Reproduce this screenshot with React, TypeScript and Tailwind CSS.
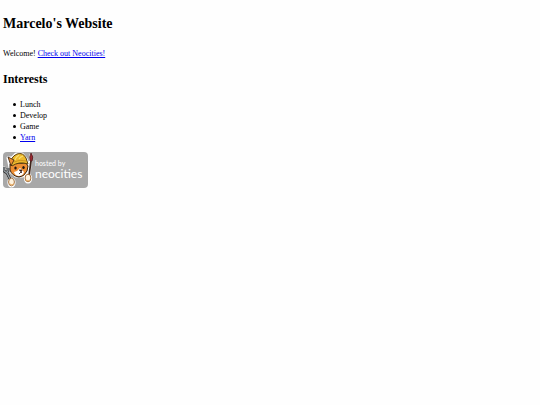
import React from 'react';

interface Interest {
  label: string;
  href?: string;
}

const interests: Interest[] = [
  { label: 'Lunch' },
  { label: 'Develop' },
  { label: 'Game' },
  { label: 'Yarn', href: '#yarn' },
];

const linkClass = 'text-[#0000ee] underline';

const CatMascot: React.FC = () => (
  <svg viewBox="0 0 32 36" className="h-9 w-8 shrink-0" aria-hidden="true">
    {/* white sticker edge */}
    <g stroke="#fff" strokeWidth="3" strokeLinejoin="round" strokeLinecap="round" fill="#fff">
      <path d="M5 6 L9 6 L13 2 L19 2 L23 7 L25 12 L24 20 L20 24 L13 24 L8 20Z" />
      <path d="M1 16 L4 21 L7 27" fill="none" />
      <path d="M28 3 L26 23" fill="none" />
      <ellipse cx="8.5" cy="30.5" rx="2.6" ry="3.6" />
      <ellipse cx="25" cy="26.5" rx="2.6" ry="3.6" />
    </g>
    {/* head */}
    <path d="M7 12 L23 11 L25 14 L24 19 Q21 25 16 25 Q9 24 7 18Z" fill="#ee8f33" stroke="#33200f" strokeWidth="1" />
    <path d="M17 16 L14 19 L11 20 Q12 24 16 24 Q20 24 21 20 L19 18Z" fill="#fff" />
    {/* helmet */}
    <path d="M8 13 Q7 5 14 2 Q20 0 23 6 L25 12 Q16 9 9 14Z" fill="#ecba2e" stroke="#5d400f" strokeWidth="1" />
    <path d="M12 8 Q13 5 16 3 M16 7 Q17 5 20 4" fill="none" stroke="#f9df72" strokeWidth="1.2" />
    <path d="M11 10 Q17 7 23 9" fill="none" stroke="#c68a1c" strokeWidth="0.8" />
    {/* ear */}
    <path d="M5 5 L11 8 L8 14Z" fill="#ee8f33" stroke="#33200f" strokeWidth="0.8" strokeLinejoin="round" />
    <ellipse cx="12.5" cy="16" rx="1.2" ry="1.6" fill="#1d1411" />
    <ellipse cx="20.5" cy="15.5" rx="1.2" ry="1.6" fill="#1d1411" />
    <path d="M16 18 L19 18 L18 20 L19 21 M18 20 L16 22" fill="#2c1815" stroke="#2c1815" strokeWidth="0.8" />
    {/* wrench */}
    <path d="M1 15 L1 19 L4 21 L7 27 M5 16 L5 19 L3 21" fill="none" stroke="#292929" strokeWidth="2.8" />
    <path d="M1 15 L1 19 L4 21 L7 27 M5 16 L5 19 L3 21" fill="none" stroke="#9ca4aa" strokeWidth="1.2" />
    {/* brush */}
    <path d="M28 9 L26 24" stroke="#3d2419" strokeWidth="1.8" />
    <path d="M28 1 Q31 5 29 9 L27 9 Q26 5 28 1Z" fill="#9d2931" stroke="#4b191b" strokeWidth="0.8" />
    {/* paws */}
    <ellipse cx="8.5" cy="30" rx="2.9" ry="3.8" fill="#fff3df" stroke="#9a622a" strokeWidth="0.9" />
    <ellipse cx="25" cy="26" rx="2.9" ry="3.8" fill="#fff3df" stroke="#9a622a" strokeWidth="0.9" />
    <path d="M7 32 Q9 34 11 32 M23 28 Q25 30 27 28" fill="none" stroke="#e5a65c" strokeWidth="1" />
  </svg>
);

const HostedBadge: React.FC = () => (
  <a
    href="#neocities"
    className="inline-flex h-9 items-center rounded-[4px] bg-[#a8a8a8] pr-[6px] font-['Lato',sans-serif] text-white"
  >
    <CatMascot />
    <span className="flex flex-col">
      <span className="text-[7px] leading-[8px]">hosted by</span>
      <span className="text-[12px] leading-[14px]">neocities</span>
    </span>
  </a>
);

const App: React.FC = () => {
  return (
    <main className="min-h-screen bg-[#fefefe] px-[3px] pt-[14px] font-['Liberation_Serif',serif] text-[8px] leading-[11px] text-black">
      <h1 className="text-[14px] leading-[20px] font-bold">Marcelo's Website</h1>
      <p className="mt-[14px]">
        Welcome! <a href="#neocities" className={linkClass}>Check out Neocities!</a>
      </p>
      <h2 className="mt-[13px] text-[12px] leading-[15px] font-bold">Interests</h2>
      <ul className="mt-3 mb-[9px] pl-[10px]">
        {interests.map((item) => (
          <li
            key={item.label}
            className="flex items-center gap-1 before:size-[3px] before:rounded-full before:bg-black"
          >
            {item.href ? <a href={item.href} className={linkClass}>{item.label}</a> : item.label}
          </li>
        ))}
      </ul>
      <HostedBadge />
    </main>
  );
};

export default App;
